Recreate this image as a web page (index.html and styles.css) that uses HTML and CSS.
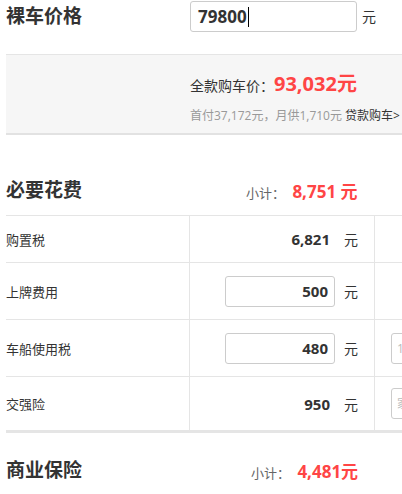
FILE: index.html
```html
<!DOCTYPE html>
<html lang="zh-CN">
<head>
<meta charset="utf-8">
<title>购车计算器</title>
<link rel="stylesheet" href="styles.css">
</head>
<body>
<div class="page">
  <div class="price-row">
    <h2 class="title">裸车价格</h2>
    <div class="field big"><span class="val">79800</span><i class="caret"></i></div>
    <span class="unit top-unit">元</span>
  </div>

  <div class="summary">
    <div class="sum-line1">全款购车价：<span class="total">93,032元</span></div>
    <div class="sum-line2">首付37,172元，月供1,710元 <a class="loan">贷款购车&gt;</a></div>
  </div>

  <div class="section-head">
    <h2 class="title sec-title">必要花费</h2>
    <div class="subtotal">小计： <span class="red">8,751 元</span></div>
  </div>

  <div class="table">
    <div class="row r1">
      <div class="cell label">购置税</div>
      <div class="cell amount"><span class="static">6,821</span><span class="unit">元</span></div>
      <div class="cell extra"></div>
    </div>
    <div class="row r2">
      <div class="cell label">上牌费用</div>
      <div class="cell amount"><span class="field small">500</span><span class="unit">元</span></div>
      <div class="cell extra"></div>
    </div>
    <div class="row r3">
      <div class="cell label">车船使用税</div>
      <div class="cell amount"><span class="field small">480</span><span class="unit">元</span></div>
      <div class="cell extra"><span class="sel">1.6L</span></div>
    </div>
    <div class="row r4">
      <div class="cell label">交强险</div>
      <div class="cell amount"><span class="static">950</span><span class="unit">元</span></div>
      <div class="cell extra"><span class="sel">家用</span></div>
    </div>
  </div>

  <div class="section-head second">
    <h2 class="title sec-title">商业保险</h2>
    <div class="subtotal">小计： <span class="red">4,481元</span></div>
  </div>
</div>
</body>
</html>
```

FILE: styles.css
```css
html, body {
  margin: 0;
  padding: 0;
  overflow: hidden;
  background: #fff;
}
body {
  font-family: "Open Sans", "Noto Sans CJK SC", sans-serif;
  color: #333;
}
.page {
  width: 480px;
  margin-left: 6px;
}
.title {
  margin: 0;
  font-size: 19px;
  font-weight: bold;
  line-height: 32px;
  color: #333;
  width: 184px;
  flex: none;
}
.price-row {
  display: flex;
  align-items: flex-start;
  height: 54px;
}
.field {
  box-sizing: border-box;
  border: 1px solid #ccc;
  border-radius: 3px;
  background: #fff;
  display: flex;
  align-items: center;
}
.field.big {
  margin-top: 1px;
  width: 167px;
  height: 31px;
  padding-left: 7px;
  font-size: 17px;
  font-weight: bold;
}
.caret {
  display: inline-block;
  width: 1px;
  height: 20px;
  background: #000;
  margin-left: 1px;
}
.unit {
  font-size: 14px;
  color: #333;
}
.top-unit {
  margin-left: 5px;
  line-height: 34px;
}
.summary {
  box-sizing: border-box;
  height: 81px;
  border-top: 1px solid #e5e5e5;
  border-bottom: 2px solid #e2e2e2;
  background: #f6f6f6;
  padding: 16px 0 0 184px;
}
.sum-line1 {
  font-size: 14px;
  line-height: 26px;
  color: #333;
  white-space: nowrap;
}
.total {
  font-size: 20px;
  font-weight: bold;
  color: #ff4545;
}
.sum-line2 {
  margin-top: 8px;
  font-size: 12px;
  line-height: 18px;
  color: #999;
  white-space: nowrap;
}
.loan {
  color: #333;
}
.section-head {
  display: flex;
  align-items: center;
  padding: 42px 0 12px;
}
.section-head.second {
  padding-top: 24px;
}
.sec-title {
  line-height: 26px;
  width: 240px;
}
.subtotal {
  font-size: 13px;
  color: #666;
  white-space: nowrap;
}
.second .subtotal {
  margin-left: 5px;
}
.red {
  font-size: 17px;
  font-weight: bold;
  color: #ff4545;
  margin-left: 4px;
}
.table {
  border-top: 1px solid #e5e5e5;
  border-bottom: 3px solid #e5e5e5;
}
.row {
  display: grid;
  grid-template-columns: 184px 185px 1fr;
  border-bottom: 1px solid #e5e5e5;
}
.row.r4 {
  border-bottom: none;
}
.row.r1 { height: 46px; }
.row.r2, .row.r3 { height: 56px; }
.row.r4 { height: 53px; }
.cell {
  display: flex;
  align-items: center;
  box-sizing: border-box;
}
.label {
  font-size: 13px;
  color: #333;
  border-right: 1px solid #e5e5e5;
}
.amount {
  justify-content: flex-end;
  padding-right: 16px;
  border-right: 1px solid #e5e5e5;
}
.amount .unit {
  margin-left: 9px;
}
.static {
  width: 110px;
  box-sizing: border-box;
  text-align: right;
  padding-right: 5px;
  font-size: 15px;
  font-weight: bold;
  color: #333;
}
.field.small {
  width: 110px;
  height: 31px;
  justify-content: flex-end;
  padding-right: 6px;
  font-size: 15px;
  font-weight: bold;
  color: #333;
}
.extra {
  padding-left: 16px;
}
.sel {
  box-sizing: border-box;
  height: 31px;
  width: 90px;
  border: 1px solid #ccc;
  border-radius: 3px;
  padding-left: 5px;
  font-size: 12px;
  line-height: 29px;
  color: #bbb;
  white-space: nowrap;
}
```
